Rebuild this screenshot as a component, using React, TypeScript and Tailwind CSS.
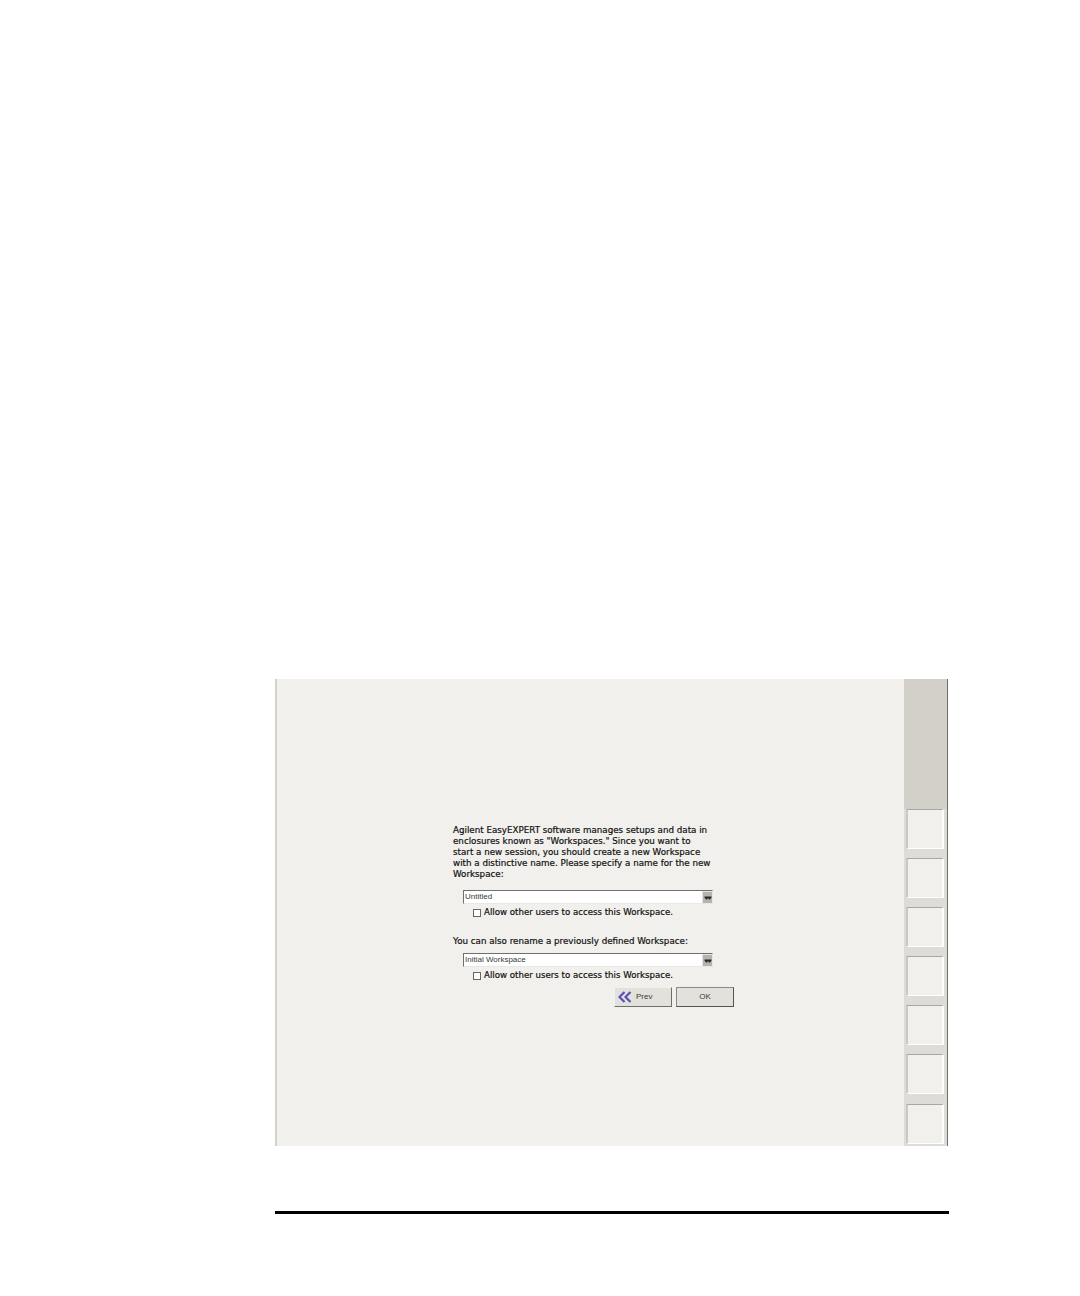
const para = [
  "Agilent EasyEXPERT software manages setups and data in",
  'enclosures known as "Workspaces." Since you want to',
  "start a new session, you should create a new Workspace",
  "with a distinctive name. Please specify a name for the new",
  "Workspace:",
];

function Combo({ value }: { value: string }) {
  return (
    <div className="ml-[10px] flex h-[14px] w-[250px] items-stretch border border-[#6f6f6b] border-r-[#e8e8e4] border-b-[#e8e8e4] bg-white">
      <span className="flex-1 overflow-hidden pl-[1px] text-[8px] leading-[12px] text-[#3a3a3a] [font-family:'Liberation_Sans',sans-serif]">{value}</span>
      <span className="flex w-[10px] items-center justify-center bg-[#b5b3ac] border-t border-l border-[#e4e3de]">
        <svg width="8" height="6" viewBox="0 0 8 6">
          <path d="M0.5 1.5h7v1l-1.5 2h-1L4 3 3 4.5H2L0.5 2.5z" fill="#2a2a2a" />
        </svg>
      </span>
    </div>
  );
}

function Check() {
  return (
    <div className="ml-[20px] mt-[2px] flex h-[13px] items-center gap-[3px] text-[#111]">
      <span className="box-border h-[8px] w-[8px] border border-[#666] bg-white" />
      <span className="text-[8.65px] leading-[13px] [-webkit-text-stroke:0.2px_#111]">
        Allow other users to access this Workspace.
      </span>
    </div>
  );
}

function SideButton() {
  return (
    <div className="ml-[2px] box-border h-[40px] w-[38px] border-t border-l-2 border-r-2 border-b border-t-[#a8a7a1] border-l-[#c9c8c2] border-r-white border-b-white bg-[#f1f0ec]" />
  );
}

export default function App() {
  return (
    <div className="h-[1296px] w-[1080px] bg-white pt-[679px] pl-[275px] [font-family:'DejaVu_Sans',sans-serif]">
      <div className="flex h-[467px] w-[673px] border-r border-[#6f6e69] bg-[#f1f0ed]">
        <div className="w-[629px] border-l-2 border-[#d2d1cc] pl-[176px] pt-[146px]">
          <div className="text-[8.72px] leading-[11px] whitespace-pre text-[#111] [-webkit-text-stroke:0.2px_#111]">
            {para.map((l) => (
              <div key={l}>{l}</div>
            ))}
          </div>
          <div className="mt-[10px]">
            <Combo value="Untitled" />
          </div>
          <Check />
          <div className="mt-[16px] text-[8.72px] leading-[13px] text-[#111] [-webkit-text-stroke:0.2px_#111]">
            You can also rename a previously defined Workspace:
          </div>
          <div className="mt-[5px]">
            <Combo value="Initial Workspace" />
          </div>
          <Check />
          <div className="ml-[161px] mt-[5px] flex gap-[4px] [font-family:'Liberation_Sans',sans-serif]">
            <div className="flex h-[20px] w-[58px] items-center border border-[#f2f1ed] border-r-[#6f6e69] border-b-[#6f6e69] bg-[#e2e1dc] pl-[3px]">
              <svg width="14" height="12" viewBox="0 0 14 12">
                <path d="M6.5 1 1.5 6l5 5M12.5 1l-5 5 5 5" fill="none" stroke="#5a50b8" strokeWidth="2.2" />
              </svg>
              <span className="ml-[4px] text-[8px] leading-[12px] text-[#3a3a3a]">Prev</span>
            </div>
            <div className="flex h-[20px] w-[58px] items-center justify-center border border-[#55544f] border-t-[#8a8984] border-l-[#8a8984] bg-[#e2e1dc] text-[8px] leading-[12px] text-[#3a3a3a]">
              OK
            </div>
          </div>
        </div>
        <div className="flex w-[43px] flex-col bg-[#d3d0c9]">
          <div className="h-[130px] shrink-0" />
          <div className="flex flex-1 flex-col bg-[#dddcd6]">
            <SideButton />
            <div className="h-[9px] shrink-0" />
            <SideButton />
            <div className="h-[9px] shrink-0" />
            <SideButton />
            <div className="h-[9px] shrink-0" />
            <SideButton />
            <div className="h-[9px] shrink-0" />
            <SideButton />
            <div className="h-[9px] shrink-0" />
            <SideButton />
            <div className="h-[10px] shrink-0" />
            <SideButton />
          </div>
        </div>
      </div>
      <div className="mt-[65px] h-[3px] w-[674px] bg-black" />
    </div>
  );
}
